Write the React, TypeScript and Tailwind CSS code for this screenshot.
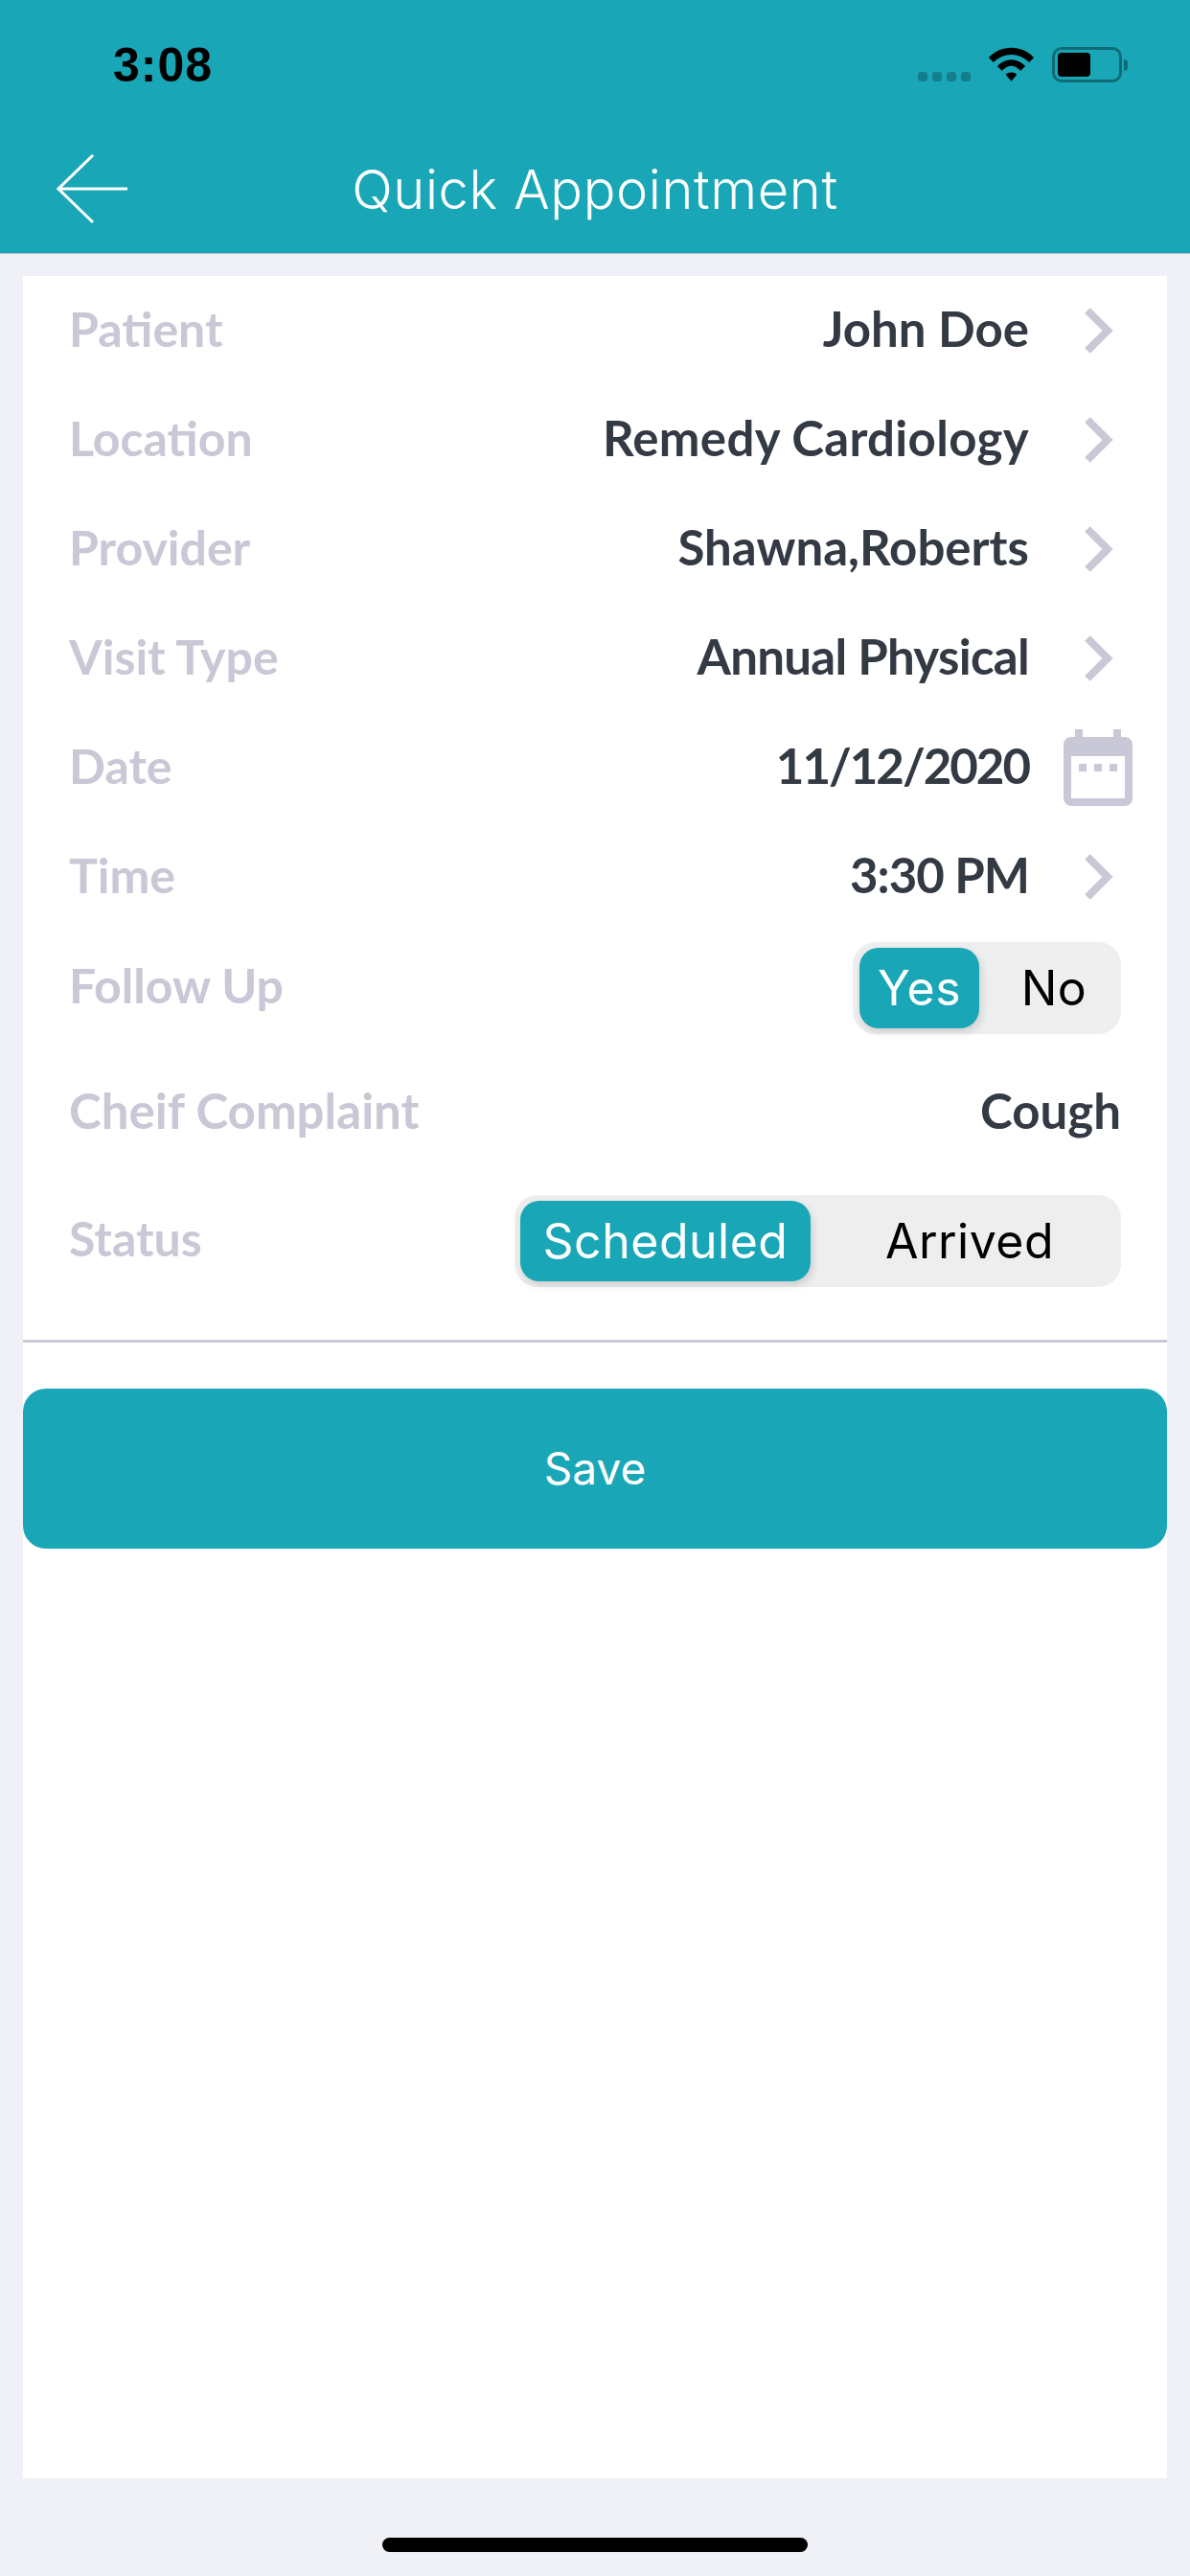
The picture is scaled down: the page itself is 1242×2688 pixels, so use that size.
const ChevronRight = () => (
    <svg width="32" height="48" viewBox="0 0 32 48" className="ml-[56px] mr-[8px] shrink-0">
        <path d="M5 3 L26 24 L5 45" fill="none" stroke="#c8c8d6" strokeWidth="8" />
    </svg>
);

const CalendarIcon = () => (
    <svg width="72" height="80" viewBox="0 0 72 80" className="ml-[36px] mr-[-12px] shrink-0">
        <path fillRule="evenodd" fill="#c8c8d6" d="M12 0h8v8h32V0h8v8h4a8 8 0 0 1 8 8v56a8 8 0 0 1-8 8H8a8 8 0 0 1-8-8V16a8 8 0 0 1 8-8h4z M8 28v44h56V28z" />
        <rect x="16" y="36" width="8" height="8" fill="#c8c8d6" />
        <rect x="32" y="36" width="8" height="8" fill="#c8c8d6" />
        <rect x="48" y="36" width="8" height="8" fill="#c8c8d6" />
    </svg>
);

const rows = [
    { label: 'Patient', value: 'John Doe', valueClass: '' },
    { label: 'Location', value: 'Remedy Cardiology', valueClass: 'tracking-[0.3px]' },
    { label: 'Provider', value: 'Shawna,Roberts', valueClass: '' },
    { label: 'Visit Type', value: 'Annual Physical', valueClass: 'tracking-[-0.7px]' },
    { label: 'Date', value: '11/12/2020', calendar: true, valueClass: 'tracking-[-2px]' },
    { label: 'Time', value: '3:30 PM', valueClass: 'tracking-[-1px]' },
];

const Toggle = ({ active, other, wrapClass, activeWidth, otherWidth }: { active: string; other: string; wrapClass: string; activeWidth: string; otherWidth: string }) => (
    <div className={`${wrapClass} flex h-[96px] items-center rounded-[24px] bg-[#eeeeee] font-['Inter',sans-serif] text-[50px] tracking-[0.5px]`}>
        <div className={`${activeWidth} flex h-[84px] items-center justify-center rounded-[20px] bg-[#19a7b7] text-white shadow-[2px_4px_8px_rgba(0,0,0,0.14)]`}>{active}</div>
        <div className={`${otherWidth} flex items-center justify-center pl-[8px] text-black`}>{other}</div>
    </div>
);

export default function App() {
    return (
        <div className="flex h-[2688px] w-[1242px] flex-col overflow-hidden bg-[#f0f1f6] font-['Lato',sans-serif]">
            <header className="h-[265px] shrink-0 border-b border-[#b5bcc0] bg-[#19a7b7]">
                <div className="flex h-[134px] items-start justify-between pt-[44px] pr-[65px] pl-[118px]">
                    <span className="font-['Liberation_Sans',sans-serif] text-[50px] leading-[48px] font-bold tracking-[1px] text-black">3:08</span>
                    <div className="flex items-end gap-[19px] pt-[5px]">
                        <div className="mb-[1px] flex gap-[5px]">
                            <span className="h-[10px] w-[10px] rounded-[3px] bg-[#137f8c]" />
                            <span className="h-[10px] w-[10px] rounded-[3px] bg-[#137f8c]" />
                            <span className="h-[10px] w-[10px] rounded-[3px] bg-[#137f8c]" />
                            <span className="h-[10px] w-[10px] rounded-[3px] bg-[#137f8c]" />
                        </div>
                        <svg width="47" height="36" viewBox="0 0 48 36" className="mb-[1px]">
                            <path d="M0 11 C13 -3 35 -3 48 11 L43 16 C32 5 16 5 5 16 Z" fill="#000" />
                            <path d="M9 20 C18 11 30 11 39 20 L34 25 C27 18 21 18 14 25 Z" fill="#000" />
                            <path d="M18 29 C21 26 27 26 30 29 L24 36 Z" fill="#000" />
                        </svg>
                        <div className="flex items-center">
                            <div className="h-[37px] w-[73px] rounded-[10px] border-[3px] border-[#116b77] p-[3px]">
                                <div className="h-full w-[34px] rounded-[4px] bg-black" />
                            </div>
                            <div className="ml-[2px] h-[12px] w-[4px] rounded-r-full bg-[#116b77]" />
                        </div>
                    </div>
                </div>
                <div className="relative flex h-[130px] items-center justify-center pb-[2px]">
                    <svg width="76" height="74" viewBox="0 0 76 74" className="absolute top-[27px] left-[59px]">
                        <path d="M38 1 L2 36 L38 71 M2 36 H74" fill="none" stroke="#ffffff" strokeWidth="3" />
                    </svg>
                    <h1 className="font-['Inter',sans-serif] text-[56px] leading-none font-light tracking-[0.6px] text-white">Quick Appointment</h1>
                </div>
            </header>

            <main className="mx-[24px] mt-[23px] flex h-[2298px] flex-col bg-white">
                <div className="px-[48px]">
                    {rows.map((row) => (
                        <div key={row.label} className="flex h-[114px] items-center justify-between text-[50px]">
                            <span className="pb-[3px] font-bold text-[#c8c8d6]">{row.label}</span>
                            <div className="flex items-center">
                                <span className={`${row.valueClass} pb-[3px] text-[51px] font-bold text-[#343a43]`}>{row.value}</span>
                                {row.calendar ? <CalendarIcon /> : <ChevronRight />}
                            </div>
                        </div>
                    ))}
                    <div className="mt-[2px] flex h-[114px] items-center justify-between text-[50px]">
                        <span className="pb-[5px] font-bold text-[#c8c8d6]">Follow Up</span>
                        <Toggle active="Yes" other="No" wrapClass="pl-[7px]" activeWidth="w-[125px]" otherWidth="w-[148px]" />
                    </div>
                    <div className="mt-[17px] flex h-[114px] items-center justify-between text-[51px]">
                        <span className="pb-[5px] font-bold text-[#c8c8d6]">Cheif Complaint</span>
                        <span className="pb-[5px] font-bold text-[#343a43]">Cough</span>
                    </div>
                    <div className="mt-[19px] flex h-[114px] items-center justify-between text-[50px]">
                        <span className="pb-[5px] font-bold text-[#c8c8d6]">Status</span>
                        <Toggle active="Scheduled" other="Arrived" wrapClass="pl-[6px]" activeWidth="w-[303px]" otherWidth="w-[324px]" />
                    </div>
                </div>
                <div className="mt-[46px] border-t-[3px] border-[#c8c8d6]" />
                <button className="mt-[48px] flex h-[167px] w-full items-center justify-center rounded-[24px] bg-[#19a7b7] font-['Inter',sans-serif] text-[46px] text-white">Save</button>
            </main>

            <div className="flex flex-1 justify-center pt-[62px]">
                <div className="h-[15px] w-[444px] rounded-full bg-black" />
            </div>
        </div>
    );
}
